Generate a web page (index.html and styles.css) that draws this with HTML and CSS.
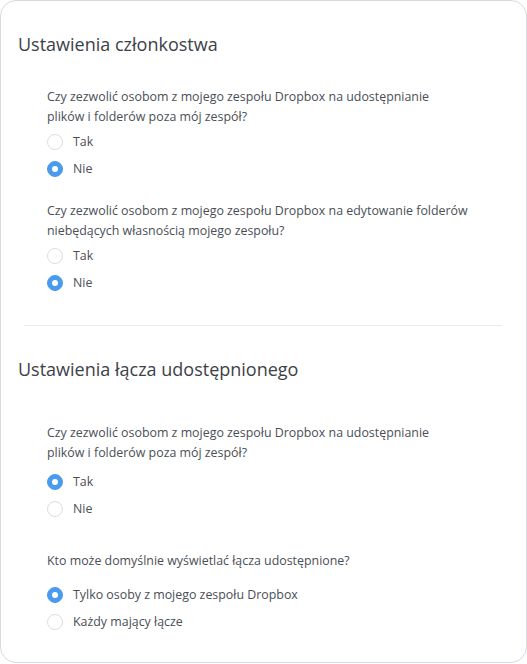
FILE: index.html
```html
<!DOCTYPE html>
<html lang="pl">
<head>
    <meta charset="UTF-8">
    <meta name="viewport" content="width=device-width, initial-scale=1.0">
    <title>Ustawienia zespołu</title>
    <link rel="stylesheet" href="styles.css">
</head>
<body>

    <div class="settings-card">
        <!-- Membership settings -->
        <section class="settings-section">
            <h2 class="section-title">Ustawienia członkostwa</h2>

            <div class="question">
                <p class="question-text">Czy zezwolić osobom z mojego zespołu Dropbox na udostępnianie plików i folderów poza mój zespół?</p>
                <div class="options">
                    <label class="option"><input type="radio" name="share-outside"><span class="radio"></span>Tak</label>
                    <label class="option"><input type="radio" name="share-outside" checked><span class="radio"></span>Nie</label>
                </div>
            </div>

            <div class="question">
                <p class="question-text">Czy zezwolić osobom z mojego zespołu Dropbox na edytowanie folderów niebędących własnością mojego zespołu?</p>
                <div class="options">
                    <label class="option"><input type="radio" name="edit-foreign"><span class="radio"></span>Tak</label>
                    <label class="option"><input type="radio" name="edit-foreign" checked><span class="radio"></span>Nie</label>
                </div>
            </div>
        </section>

        <hr class="divider">

        <!-- Shared link settings -->
        <section class="settings-section section-links">
            <h2 class="section-title">Ustawienia łącza udostępnionego</h2>

            <div class="question">
                <p class="question-text">Czy zezwolić osobom z mojego zespołu Dropbox na udostępnianie plików i folderów poza mój zespół?</p>
                <div class="options">
                    <label class="option"><input type="radio" name="links-outside" checked><span class="radio"></span>Tak</label>
                    <label class="option"><input type="radio" name="links-outside"><span class="radio"></span>Nie</label>
                </div>
            </div>

            <div class="question">
                <p class="question-text">Kto może domyślnie wyświetlać łącza udostępnione?</p>
                <div class="options">
                    <label class="option"><input type="radio" name="link-audience" checked><span class="radio"></span>Tylko osoby z mojego zespołu Dropbox</label>
                    <label class="option"><input type="radio" name="link-audience"><span class="radio"></span>Każdy mający łącze</label>
                </div>
            </div>
        </section>
    </div>

</body>
</html>
```

FILE: styles.css
```css
/* Reset */
*, *::before, *::after {
    box-sizing: border-box;
    margin: 0;
    padding: 0;
}

body {
    font-family: 'Open Sans', 'Noto Sans', sans-serif;
    color: #4a4f56;
    background: #ffffff;
}

/* Card */
.settings-card {
    width: 527px;
    height: 663px;
    padding-top: 31px;
    border: 1px solid #d6dae0;
    border-radius: 16px;
    background: #ffffff;
}

.section-title {
    margin: 0 0 31px 17px;
    font-size: 18px;
    line-height: 24px;
    font-weight: 400;
    color: #3d4148;
}

.section-links .section-title {
    margin-bottom: 42px;
}

/* Questions */
.question {
    margin-left: 46px;
    margin-bottom: 19px;
}

.question-text {
    width: 422px;
    font-size: 12.4px;
    line-height: 20px;
    margin-bottom: 1px;
}

.section-links .question {
    margin-bottom: 29px;
}

.section-links .question-text {
    margin-bottom: 5px;
}

.section-links .question + .question .question-text {
    margin-bottom: 10px;
}

/* Radio options */
.options {
    display: flex;
    flex-direction: column;
}

.option {
    display: flex;
    align-items: center;
    gap: 10px;
    height: 27px;
    font-size: 12.4px;
    cursor: pointer;
}

.option input {
    display: none;
}

.radio {
    width: 16px;
    height: 16px;
    border: 1px solid #d9dde2;
    border-radius: 50%;
    background: #ffffff;
    display: flex;
    align-items: center;
    justify-content: center;
}

.option input:checked + .radio {
    border-color: #4a9bef;
    background: #4a9bef;
}

.option input:checked + .radio::after {
    content: '';
    width: 6px;
    height: 6px;
    border-radius: 50%;
    background: #ffffff;
}

/* Divider between sections */
.divider {
    height: 1px;
    margin: 29px 24px 31px 23px;
    border: none;
    background: #e7eaee;
}
```
